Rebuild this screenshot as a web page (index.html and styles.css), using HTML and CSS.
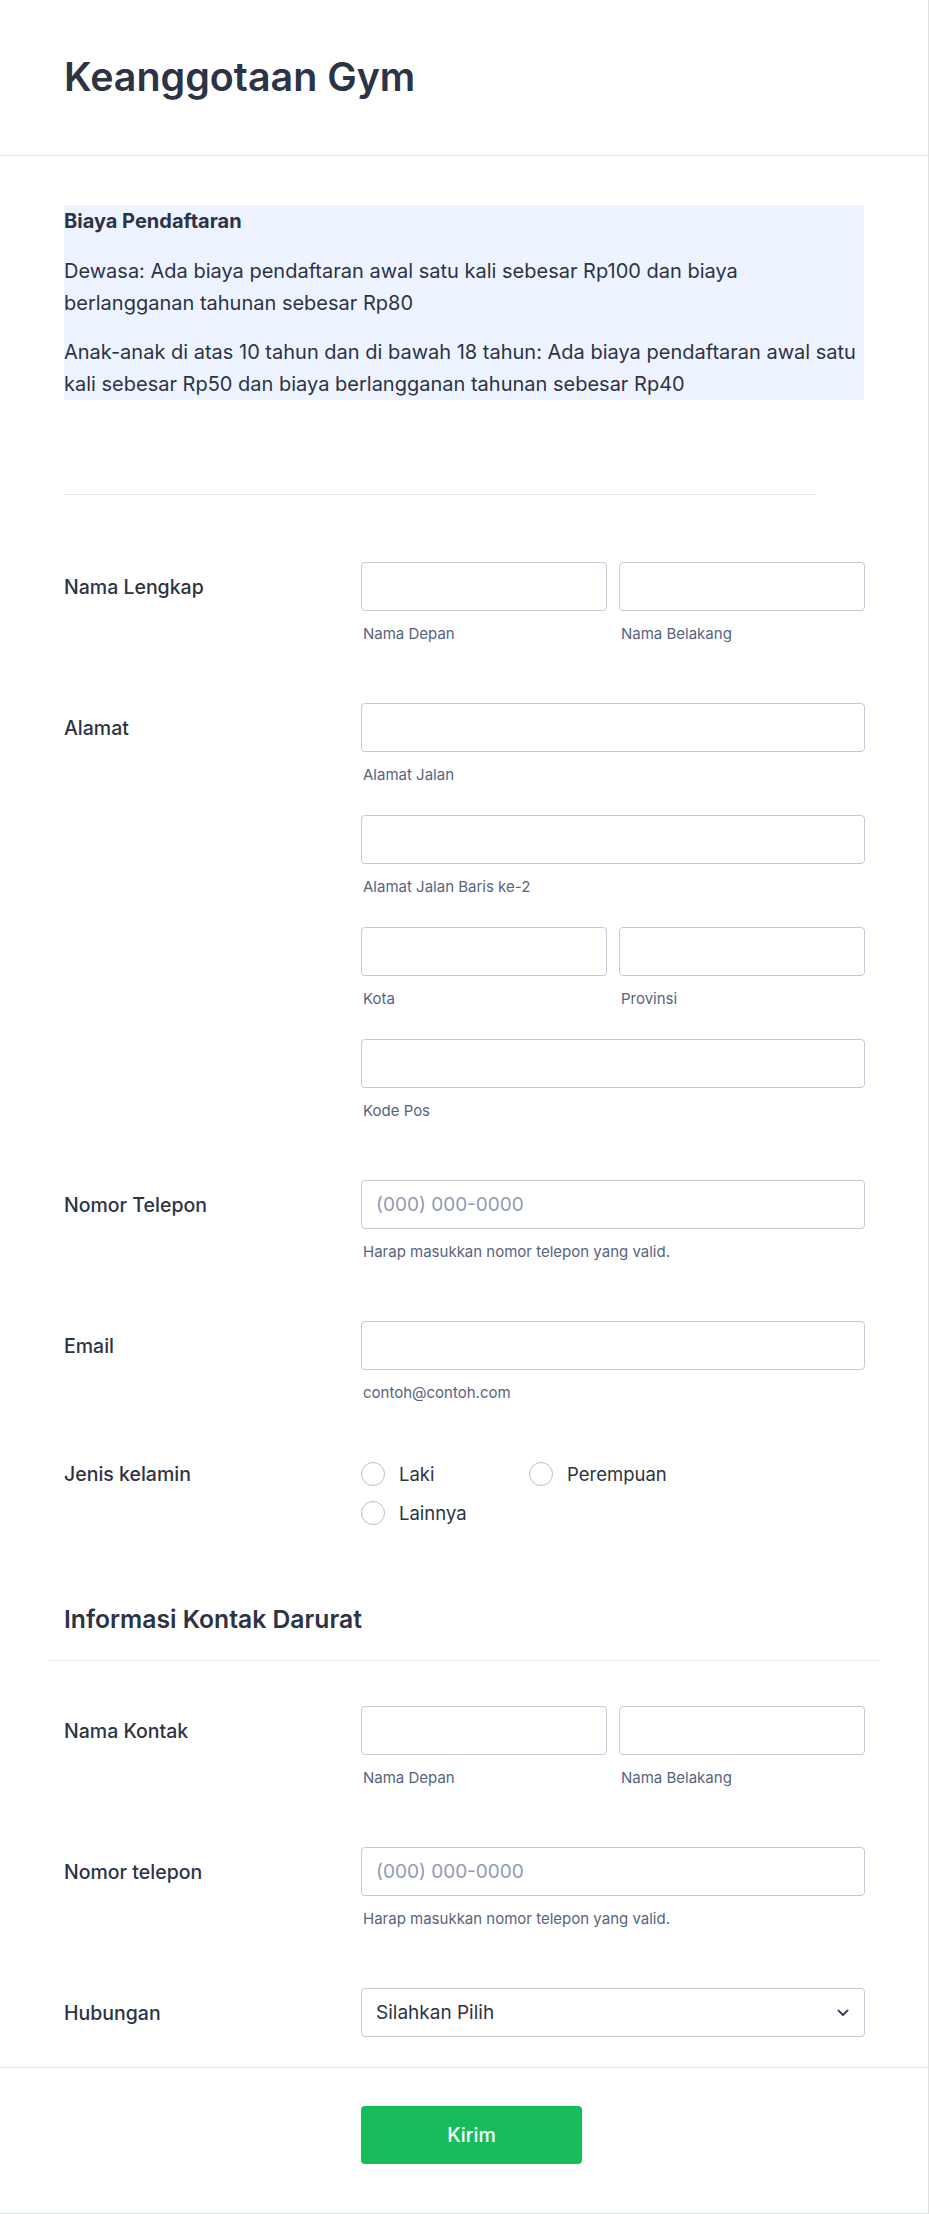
FILE: index.html
```html
<!DOCTYPE html>
<html lang="id">
<head>
<meta charset="utf-8">
<title>Keanggotaan Gym</title>
<link rel="stylesheet" href="styles.css">
</head>
<body>
<div class="card">
  <header class="card-header">
    <h1 class="title">Keanggotaan Gym</h1>
  </header>
  <main class="card-body">
    <section class="notice">
      <p class="notice-title">Biaya Pendaftaran</p>
      <p class="notice-text">Dewasa: Ada biaya pendaftaran awal satu kali sebesar Rp100 dan biaya berlangganan tahunan sebesar Rp80</p>
      <p class="notice-text">Anak-anak di atas 10 tahun dan di bawah 18 tahun: Ada biaya pendaftaran awal satu kali sebesar Rp50 dan biaya berlangganan tahunan sebesar Rp40</p>
    </section>
    <hr class="divider">

    <div class="field">
      <div class="label">Nama Lengkap</div>
      <div class="controls">
        <div class="pair">
          <div class="sub"><div class="input"></div><div class="sublabel">Nama Depan</div></div>
          <div class="sub"><div class="input"></div><div class="sublabel">Nama Belakang</div></div>
        </div>
      </div>
    </div>

    <div class="field">
      <div class="label">Alamat</div>
      <div class="controls">
        <div class="sub"><div class="input"></div><div class="sublabel">Alamat Jalan</div></div>
        <div class="sub"><div class="input"></div><div class="sublabel">Alamat Jalan Baris ke-2</div></div>
        <div class="pair">
          <div class="sub"><div class="input"></div><div class="sublabel">Kota</div></div>
          <div class="sub"><div class="input"></div><div class="sublabel">Provinsi</div></div>
        </div>
        <div class="sub"><div class="input"></div><div class="sublabel">Kode Pos</div></div>
      </div>
    </div>

    <div class="field">
      <div class="label">Nomor Telepon</div>
      <div class="controls">
        <div class="sub"><div class="input placeholder">(000) 000-0000</div><div class="sublabel">Harap masukkan nomor telepon yang valid.</div></div>
      </div>
    </div>

    <div class="field">
      <div class="label">Email</div>
      <div class="controls">
        <div class="sub"><div class="input"></div><div class="sublabel">contoh@contoh.com</div></div>
      </div>
    </div>

    <div class="field field-radio">
      <div class="label label-short">Jenis kelamin</div>
      <div class="controls radios">
        <div class="radio"><span class="circle"></span><span>Laki</span></div>
        <div class="radio"><span class="circle"></span><span>Perempuan</span></div>
        <div class="radio"><span class="circle"></span><span>Lainnya</span></div>
      </div>
    </div>

    <div class="section-head">
      <h2 class="section-title">Informasi Kontak Darurat</h2>
    </div>

    <div class="field">
      <div class="label">Nama Kontak</div>
      <div class="controls">
        <div class="pair">
          <div class="sub"><div class="input"></div><div class="sublabel">Nama Depan</div></div>
          <div class="sub"><div class="input"></div><div class="sublabel">Nama Belakang</div></div>
        </div>
      </div>
    </div>

    <div class="field">
      <div class="label">Nomor telepon</div>
      <div class="controls">
        <div class="sub"><div class="input placeholder">(000) 000-0000</div><div class="sublabel">Harap masukkan nomor telepon yang valid.</div></div>
      </div>
    </div>

    <div class="field field-last">
      <div class="label">Hubungan</div>
      <div class="controls">
        <div class="input select"><span>Silahkan Pilih</span>
          <svg class="chevron" width="12" height="8" viewBox="0 0 12 8"><path d="M1.5 1.5 L6 6 L10.5 1.5" fill="none" stroke="#3e4558" stroke-width="2" stroke-linecap="round" stroke-linejoin="round"/></svg>
        </div>
      </div>
    </div>
  </main>
  <footer class="card-footer">
    <div class="footer-inner">
      <button class="submit" type="button">Kirim</button>
    </div>
  </footer>
</div>
</body>
</html>
```

FILE: styles.css
```css
* { box-sizing: border-box; }
html, body { margin: 0; padding: 0; background: #fff; }
body {
  font-family: Inter, "Noto Sans", "Liberation Sans", sans-serif;
  color: #2c3345;
}
.card {
  width: 929px;
  border-right: 1px solid #dcdfe6;
  border-bottom: 1px solid #dcdfe6;
  background: #fff;
}
.card-header {
  height: 156px;
  padding: 53px 64px 0;
  border-bottom: 1px solid #e3e5ea;
}
.title {
  margin: 0;
  font-size: 39.4px;
  line-height: 48px;
  font-weight: 600;
  color: #2c3345;
}
.card-body {
  padding: 49px 64px 30px;
}
.notice {
  background: #eef4ff;
  padding-right: 8px;
}
.notice p { margin: 0; font-size: 20px; line-height: 32px; }
.notice-title { font-weight: 700; }
.notice-text { margin-top: 18px !important; }
.notice-text + .notice-text { margin-top: 17px !important; }
.divider {
  border: 0;
  border-top: 1px solid #e6e7eb;
  width: 753px;
  margin: 94px 0 67px;
}
.field {
  display: grid;
  grid-template-columns: 297px 504px;
  margin-bottom: 57px;
}
.field-radio { margin-bottom: 56px; }
.field-last { margin-bottom: 0; }
.label {
  height: 49px;
  display: flex;
  align-items: center;
  font-size: 19.5px;
  font-weight: 500;
  color: #2c3345;
}
.label-short { height: 24px; }
.controls { display: flex; flex-direction: column; gap: 28px; }
.pair { display: grid; grid-template-columns: 1fr 1fr; gap: 12px; }
.input {
  height: 49px;
  border: 1px solid #c3cad8;
  border-radius: 4px;
  background: #fff;
  display: flex;
  align-items: center;
  padding: 0 14px;
  font-size: 19px;
}
.placeholder { color: #8f9bb0; }
.sublabel {
  margin-top: 11px;
  font-size: 15px;
  line-height: 24px;
  color: #57647e;
  padding-left: 2px;
}
.select { justify-content: space-between; color: #2c3345; padding-right: 15px; }
.radios {
  display: grid;
  grid-template-columns: 168px 168px;
  gap: 15px 0;
}
.radio {
  display: flex;
  align-items: center;
  gap: 14px;
  height: 24px;
  font-size: 18.5px;
  color: #2c3345;
}
.circle {
  width: 24px;
  height: 24px;
  border: 1px solid #b8bdc9;
  border-radius: 50%;
  flex: none;
}
.section-head {
  margin: 0 -17px 45px;
  padding: 22px 17px 25px;
  border-bottom: 1px solid #ebecf0;
}
.section-title {
  margin: 0;
  font-size: 24.7px;
  line-height: 32px;
  font-weight: 600;
  color: #2c3345;
}
.card-footer {
  border-top: 1px solid #e3e5ea;
  padding: 38px 64px 49px;
}
.footer-inner { padding-left: 297px; }
.submit {
  width: 221px;
  height: 58px;
  border: 0;
  border-radius: 4px;
  background: #18bd5b;
  color: #fff;
  font-family: Inter, "Noto Sans", sans-serif;
  font-size: 19.5px;
  font-weight: 500;
}
```
